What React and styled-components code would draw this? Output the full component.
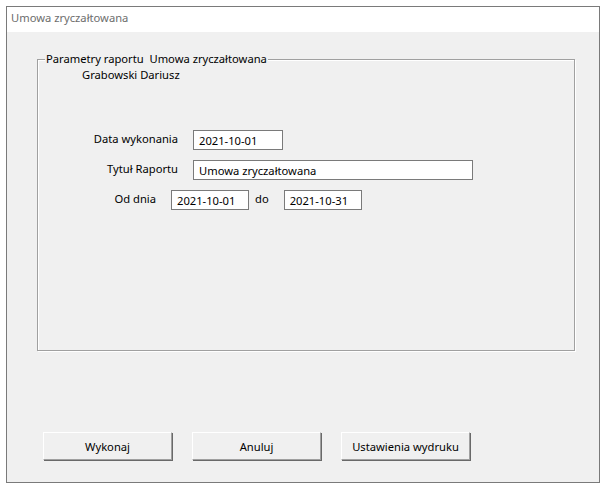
import React from 'react';
import styled, { createGlobalStyle } from 'styled-components';

const GlobalStyle = createGlobalStyle`
    html, body {
        margin: 0;
        padding: 0;
        background: #ffffff;
    }
    body {
        font-family: "Noto Sans", "Open Sans", sans-serif;
        font-size: 11.2px;
        color: #000;
    }
`;

const Okno = styled.div`
    margin: 6px 0 0 6px;
    width: 594px;
    height: 477px;
    box-sizing: border-box;
    border: 1px solid #7a7a7a;
    display: flex;
    flex-direction: column;
    background: #f0f0f0;
`;

const PasekTytulu = styled.div`
    height: 25px;
    box-sizing: border-box;
    background: #ffffff;
    display: flex;
    align-items: center;
    padding: 0 0 4px 4px;
    color: #6d6d6d;
`;

const Tresc = styled.div`
    flex: 1;
    display: flex;
    flex-direction: column;
`;

const Ramka = styled.fieldset`
    margin: 19px 0 0 30px;
    padding: 0;
    width: 538px;
    height: 300px;
    box-sizing: border-box;
    border: 1px solid #a0a0a0;
    box-shadow: 1px 1px 0 #fff, inset 1px 1px 0 #fff;
    min-width: 0;
`;

const Legenda = styled.legend`
    margin-left: 7px;
    padding: 0 1px;
    background: #f0f0f0;
    line-height: 16px;
    white-space: pre;
`;

const Osoba = styled.div`
    padding-left: 44px;
    line-height: 16px;
`;

const Formularz = styled.div`
    margin-top: 47px;
    display: flex;
    flex-direction: column;
    gap: 10px;
`;

const Wiersz = styled.div`
    display: flex;
    align-items: flex-start;
`;

const Etykieta = styled.label`
    width: ${p => p.$szer}px;
    text-align: right;
    margin-right: 15px;
    line-height: 16px;
    padding-top: 1px;
`;

const Pole = styled.div`
    width: ${p => p.$szer}px;
    height: 20px;
    box-sizing: border-box;
    border: 1px solid #7a7a7a;
    background: #fff;
    padding-left: 5px;
    display: flex;
    align-items: center;
    padding-top: 1px;
`;

const Lacznik = styled.span`
    margin: 0 15px 0 6px;
    line-height: 16px;
    padding-top: 1px;
`;

const Odstep = styled.div`
    flex: 1;
`;

const RzadPrzyciskow = styled.div`
    display: flex;
    gap: 20px;
    padding: 0 0 22px 36px;
`;

const Przycisk = styled.button`
    width: 129px;
    height: 28px;
    box-sizing: border-box;
    background: #f0f0f0;
    border: none;
    border-top: 1px solid #ffffff;
    border-left: 1px solid #ffffff;
    border-right: 1px solid #a0a0a0;
    border-bottom: 1px solid #a0a0a0;
    box-shadow: 1px 1px 0 #696969;
    font-family: inherit;
    font-size: inherit;
    color: #000;
    padding: 0;
`;

function App() {
    return (
        <>
            <GlobalStyle />
            <Okno>
                <PasekTytulu>Umowa zryczałtowana</PasekTytulu>
                <Tresc>
                    <Ramka>
                        <Legenda>Parametry raportu  Umowa zryczałtowana</Legenda>
                        <Osoba>Grabowski Dariusz</Osoba>
                        <Formularz>
                            <Wiersz>
                                <Etykieta $szer={140}>Data wykonania</Etykieta>
                                <Pole $szer={90}>2021-10-01</Pole>
                            </Wiersz>
                            <Wiersz>
                                <Etykieta $szer={140}>Tytuł Raportu</Etykieta>
                                <Pole $szer={280}>Umowa zryczałtowana</Pole>
                            </Wiersz>
                            <Wiersz>
                                <Etykieta $szer={118}>Od dnia</Etykieta>
                                <Pole $szer={78}>2021-10-01</Pole>
                                <Lacznik>do</Lacznik>
                                <Pole $szer={78}>2021-10-31</Pole>
                            </Wiersz>
                        </Formularz>
                    </Ramka>
                    <Odstep />
                    <RzadPrzyciskow>
                        <Przycisk>Wykonaj</Przycisk>
                        <Przycisk>Anuluj</Przycisk>
                        <Przycisk>Ustawienia wydruku</Przycisk>
                    </RzadPrzyciskow>
                </Tresc>
            </Okno>
        </>
    );
}

export default App;
